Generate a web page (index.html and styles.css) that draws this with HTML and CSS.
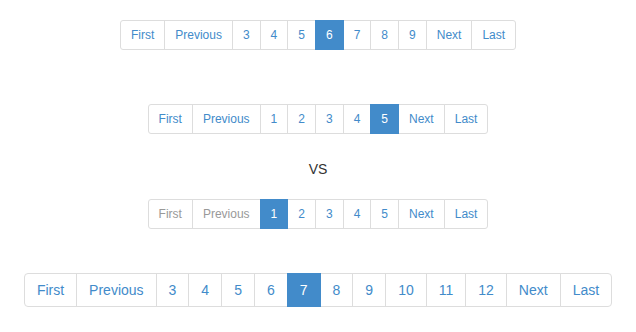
FILE: index.html
```html
<!DOCTYPE html>
<html lang="en">
<head>
    <meta charset="UTF-8">
    <title>Pagination</title>
    <link rel="stylesheet" href="styles.css">
</head>
<body>
    <ul class="pagination pagination-sm top">
        <li><a href="#">First</a></li>
        <li><a href="#">Previous</a></li>
        <li><a href="#">3</a></li>
        <li><a href="#">4</a></li>
        <li><a href="#">5</a></li>
        <li class="active"><a href="#">6</a></li>
        <li><a href="#">7</a></li>
        <li><a href="#">8</a></li>
        <li><a href="#">9</a></li>
        <li><a href="#">Next</a></li>
        <li><a href="#">Last</a></li>
    </ul>
    <ul class="pagination pagination-sm second">
        <li><a href="#">First</a></li>
        <li><a href="#">Previous</a></li>
        <li><a href="#">1</a></li>
        <li><a href="#">2</a></li>
        <li><a href="#">3</a></li>
        <li><a href="#">4</a></li>
        <li class="active"><a href="#">5</a></li>
        <li><a href="#">Next</a></li>
        <li><a href="#">Last</a></li>
    </ul>
    <p class="versus">VS</p>
    <ul class="pagination pagination-sm third">
        <li class="disabled"><a href="#">First</a></li>
        <li class="disabled"><a href="#">Previous</a></li>
        <li class="active"><a href="#">1</a></li>
        <li><a href="#">2</a></li>
        <li><a href="#">3</a></li>
        <li><a href="#">4</a></li>
        <li><a href="#">5</a></li>
        <li><a href="#">Next</a></li>
        <li><a href="#">Last</a></li>
    </ul>
    <ul class="pagination bottom">
        <li><a href="#">First</a></li>
        <li><a href="#">Previous</a></li>
        <li><a href="#">3</a></li>
        <li><a href="#">4</a></li>
        <li><a href="#">5</a></li>
        <li><a href="#">6</a></li>
        <li class="active"><a href="#">7</a></li>
        <li><a href="#">8</a></li>
        <li><a href="#">9</a></li>
        <li><a href="#">10</a></li>
        <li><a href="#">11</a></li>
        <li><a href="#">12</a></li>
        <li><a href="#">Next</a></li>
        <li><a href="#">Last</a></li>
    </ul>
</body>
</html>
```

FILE: styles.css
```css
body {
    margin: 0;
    padding-top: 20px;
    font-family: "Liberation Sans", Arial, sans-serif;
    font-size: 14px;
    color: #333;
    background-color: #fff;
    display: flex;
    flex-direction: column;
    align-items: center;
}
.pagination {
    display: flex;
    list-style: none;
    margin: 0;
    padding: 0;
}
.pagination li a {
    display: block;
    padding: 6px 12px;
    margin-left: -1px;
    line-height: 20px;
    font-size: 14px;
    color: #428bca;
    text-decoration: none;
    background-color: #fff;
    border: 1px solid #ddd;
}
.pagination li:first-child a {
    margin-left: 0;
    border-radius: 4px 0 0 4px;
}
.pagination li:last-child a {
    border-radius: 0 4px 4px 0;
}
.pagination li.active a {
    color: #fff;
    background-color: #428bca;
    border-color: #428bca;
    position: relative;
}
.pagination li.disabled a {
    color: #999;
}
.pagination-sm li a {
    padding: 5px 10px;
    font-size: 12px;
    line-height: 18px;
}
.pagination-sm li:first-child a {
    border-radius: 3px 0 0 3px;
}
.pagination-sm li:last-child a {
    border-radius: 0 3px 3px 0;
}
.second {
    margin-top: 54px;
}
.versus {
    margin: 0;
    margin-top: 25px;
    line-height: 20px;
}
.third {
    margin-top: 20px;
}
.bottom {
    margin-top: 44px;
}
```
